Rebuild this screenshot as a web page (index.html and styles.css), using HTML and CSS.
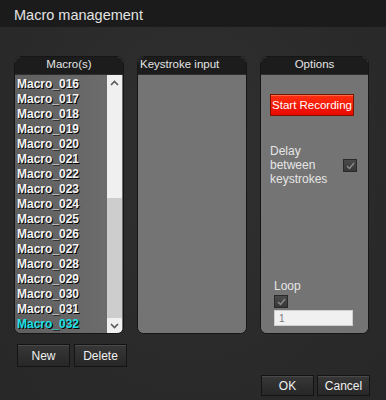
FILE: index.html
```html
<!DOCTYPE html>
<html lang="en">
<head>
    <meta charset="UTF-8">
    <meta name="viewport" content="width=device-width, initial-scale=1.0">
    <title>Macro management</title>
    <link rel="stylesheet" href="styles.css">
</head>
<body>
    <div class="window">
        <div class="titlebar">Macro management</div>

        <div class="content">
            <div class="panels">
                <!-- Macro list -->
                <div class="panel">
                    <div class="panel-head center">Macro(s)</div>
                    <div class="panel-body list-body">
                        <ul class="macro-list">
                            <li>Macro_016</li>
                            <li>Macro_017</li>
                            <li>Macro_018</li>
                            <li>Macro_019</li>
                            <li>Macro_020</li>
                            <li>Macro_021</li>
                            <li>Macro_022</li>
                            <li>Macro_023</li>
                            <li>Macro_024</li>
                            <li>Macro_025</li>
                            <li>Macro_026</li>
                            <li>Macro_027</li>
                            <li>Macro_028</li>
                            <li>Macro_029</li>
                            <li>Macro_030</li>
                            <li>Macro_031</li>
                            <li class="selected">Macro_032</li>
                        </ul>
                        <div class="scrollbar">
                            <div class="scroll-btn">
                                <svg width="9" height="6" viewBox="0 0 9 6"><polyline points="1,5 4.5,1.5 8,5" fill="none" stroke="#5a5a5a" stroke-width="1.6"/></svg>
                            </div>
                            <div class="scroll-track"></div>
                            <div class="scroll-thumb"></div>
                            <div class="scroll-btn">
                                <svg width="9" height="6" viewBox="0 0 9 6"><polyline points="1,1 4.5,4.5 8,1" fill="none" stroke="#5a5a5a" stroke-width="1.6"/></svg>
                            </div>
                        </div>
                    </div>
                </div>

                <!-- Keystrokes -->
                <div class="panel">
                    <div class="panel-head">Keystroke input</div>
                    <div class="panel-body"></div>
                </div>

                <!-- Options -->
                <div class="panel">
                    <div class="panel-head center">Options</div>
                    <div class="panel-body options-body">
                        <button class="record-btn">Start Recording</button>
                        <div class="option-row">
                            <span class="option-label">Delay<br>between<br>keystrokes</span>
                            <span class="checkbox">
                                <svg width="9" height="8" viewBox="0 0 9 8"><polyline points="1,4 3.5,6.5 8,1" fill="none" stroke="#8a8a8a" stroke-width="1.5"/></svg>
                            </span>
                        </div>
                        <div class="loop">
                            <span class="option-label loop-label">Loop</span>
                            <span class="checkbox">
                                <svg width="9" height="8" viewBox="0 0 9 8"><polyline points="1,4 3.5,6.5 8,1" fill="none" stroke="#8a8a8a" stroke-width="1.5"/></svg>
                            </span>
                            <input class="loop-input" type="text" value="1">
                        </div>
                    </div>
                </div>
            </div>

            <div class="list-actions">
                <button class="btn">New</button>
                <button class="btn">Delete</button>
            </div>

            <div class="dialog-actions">
                <button class="btn">OK</button>
                <button class="btn">Cancel</button>
            </div>
        </div>
    </div>
</body>
</html>
```

FILE: styles.css
```css
body {
    margin: 0;
    font-family: 'Liberation Sans', Arial, sans-serif;
    background: #2a2a2a;
    color: #e0e0e0;
}

.window {
    width: 386px;
    height: 400px;
    background: radial-gradient(ellipse at 50% 40%, #303030 0%, #272727 100%);
    overflow: hidden;
}

.titlebar {
    height: 27px;
    line-height: 31px;
    padding-left: 14px;
    background: #1b1b1b;
    font-size: 14.5px;
    color: #e2e2e2;
}

.content {
    padding: 29px 16px 0 14px;
}

.panels {
    display: flex;
    gap: 13px;
}

.panel {
    width: 110px;
    height: 278px;
    display: flex;
    flex-direction: column;
    border: 1px solid #161616;
    border-radius: 7px;
    overflow: hidden;
    box-sizing: border-box;
    background: #737373;
}

.panel:last-child {
    width: 109px;
}

.panel-head {
    height: 17px;
    line-height: 15px;
    padding-left: 2px;
    background: #1c1c1c;
    font-size: 11.5px;
    color: #e4e4e4;
    border-bottom: 1px solid #2e2e2e;
}

.panel-head.center {
    text-align: center;
    padding-left: 0;
}

.panel-body {
    flex: 1;
    background: #747474;
}

/* Macro list */
.list-body {
    display: flex;
    background: linear-gradient(90deg, #5f5f5f, #6e6e6e);
}

.macro-list {
    flex: 1;
    list-style: none;
    margin: 0;
    padding: 2px 0 0 2px;
}

.macro-list li {
    height: 15px;
    line-height: 15px;
    font-size: 12px;
    font-weight: bold;
    color: #f4f4f4;
    text-shadow: 1px 1px 0 #000;
}

.macro-list li.selected {
    color: #19e0e6;
}

.scrollbar {
    width: 15px;
    margin-right: 1px;
    display: flex;
    flex-direction: column;
    background: #f0f0f0;
}

.scroll-btn {
    height: 15px;
    display: flex;
    align-items: center;
    justify-content: center;
}

.scroll-track {
    height: 108px;
}

.scroll-thumb {
    flex: 1;
    background: #cdcdcd;
}

/* Options */
.options-body {
    display: flex;
    flex-direction: column;
    padding: 19px 0 7px 9px;
}

.record-btn {
    width: 84px;
    height: 22px;
    padding: 0;
    border: 1px solid #7a1400;
    background: linear-gradient(#ff3010, #e80800);
    color: #fff;
    font-family: 'Liberation Sans', Arial, sans-serif;
    font-size: 11.5px;
    box-shadow: inset 0 1px 0 rgba(255, 160, 120, 0.5);
}

.option-row {
    display: flex;
    align-items: center;
    margin-top: 28px;
}

.option-label {
    font-size: 12px;
    line-height: 14px;
    color: #e6e6e6;
}

.option-row .option-label {
    width: 73px;
}

.checkbox {
    width: 12px;
    height: 11px;
    display: flex;
    align-items: center;
    justify-content: center;
    background: linear-gradient(#4a4a4a, #383838);
    border: 1px solid #2a2a2a;
}

.option-row .checkbox {
    margin-top: 1px;
}

.loop {
    margin-top: auto;
    padding-left: 4px;
    display: flex;
    flex-direction: column;
    align-items: flex-start;
}

.loop-label {
    line-height: 17px;
}

.loop-input {
    width: 79px;
    height: 16px;
    margin-top: 2px;
    padding: 0 0 0 4px;
    box-sizing: border-box;
    border: 1px solid #cfcfcf;
    background: #f0f0f0;
    font-family: 'Liberation Sans', Arial, sans-serif;
    font-size: 10px;
    color: #777;
}

/* Buttons */
.btn {
    width: 53px;
    height: 23px;
    padding: 0;
    border: 1px solid #141414;
    background: linear-gradient(#373737, #272727);
    box-shadow: inset 0 1px 0 #4a4a4a;
    color: #f0f0f0;
    font-family: 'Liberation Sans', Arial, sans-serif;
    font-size: 12px;
}

.list-actions {
    display: flex;
    gap: 4px;
    margin-top: 10px;
    padding-left: 3px;
}

.dialog-actions {
    display: flex;
    justify-content: flex-end;
    gap: 3px;
    margin-top: 8px;
}

.dialog-actions .btn {
    height: 21px;
}
```
